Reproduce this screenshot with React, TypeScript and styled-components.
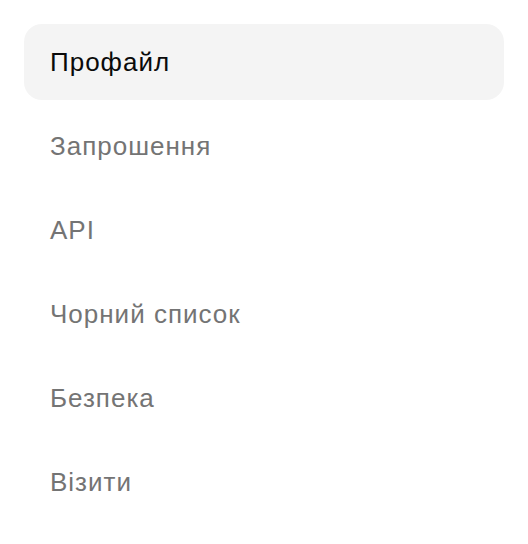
import React from "react";
import styled, { createGlobalStyle } from "styled-components";

const GlobalStyle = createGlobalStyle`
  html, body {
    margin: 0;
    padding: 0;
    background: #ffffff;
  }
  body {
    font-family: "Liberation Sans", Arial, sans-serif;
  }
`;

const Page = styled.div`
  width: 528px;
  height: 544px;
  box-sizing: border-box;
  padding: 24px 24px 0 24px;
`;

const Menu = styled.nav`
  display: flex;
  flex-direction: column;
  gap: 8px;
`;

const Item = styled.a<{ $active?: boolean }>`
  display: flex;
  align-items: center;
  height: 76px;
  padding: 0 26px;
  border-radius: 18px;
  font-size: 26px;
  letter-spacing: 1px;
  text-decoration: none;
  cursor: pointer;
  background: ${(p) => (p.$active ? "#f4f4f4" : "transparent")};
  color: ${(p) => (p.$active ? "#0a0a0a" : "#747474")};
`;

const items = ["Профайл", "Запрошення", "API", "Чорний список", "Безпека", "Візити"];

const App: React.FC = () => {
  return (
    <Page>
      <GlobalStyle />
      <Menu>
        {items.map((label, i) => (
          <Item key={label} $active={i === 0}>
            {label}
          </Item>
        ))}
      </Menu>
    </Page>
  );
};

export default App;
